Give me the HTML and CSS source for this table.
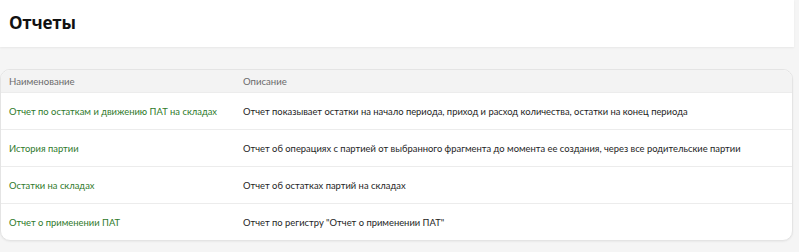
FILE: index.html
```html
<!DOCTYPE html>
<html lang="ru">
<head>
<meta charset="utf-8">
<link rel="stylesheet" href="styles.css">
</head>
<body>
<div class="page">
  <header class="topbar">
    <h1 class="title">Отчеты</h1>
  </header>
  <main class="content">
    <section class="card">
      <div class="row head">
        <div class="cell name">Наименование</div>
        <div class="cell desc">Описание</div>
      </div>
      <div class="row">
        <div class="cell name link">Отчет по остаткам и движению ПАТ на складах</div>
        <div class="cell desc">Отчет показывает остатки на начало периода, приход и расход количества, остатки на конец периода</div>
      </div>
      <div class="row">
        <div class="cell name link">История партии</div>
        <div class="cell desc">Отчет об операциях с партией от выбранного фрагмента до момента ее создания, через все родительские партии</div>
      </div>
      <div class="row">
        <div class="cell name link">Остатки на складах</div>
        <div class="cell desc">Отчет об остатках партий на складах</div>
      </div>
      <div class="row">
        <div class="cell name link">Отчет о применении ПАТ</div>
        <div class="cell desc">Отчет по регистру "Отчет о применении ПАТ"</div>
      </div>
    </section>
  </main>
</div>
</body>
</html>
```
FILE: styles.css
```css
* { box-sizing: border-box; }
html, body { margin: 0; padding: 0; }
body {
  background: #f5f5f5;
  font-family: Lato, Roboto, sans-serif;
  color: #1a1a1a;
  width: 799px;
  height: 252px;
  overflow: hidden;
}
.page { padding-right: 5px; }
.topbar {
  background: #fff;
  height: 47px;
  display: flex;
  align-items: center;
  padding-left: 9px;
  box-shadow: 0 1px 2px rgba(0,0,0,0.06);
}
.title {
  margin: 0;
  font-family: "Open Sans", "Noto Sans", sans-serif;
  font-size: 17px;
  font-weight: 700;
  color: #111;
  letter-spacing: -0.2px;
  padding-bottom: 3px;
}
.content { padding-top: 22px; }
.card {
  background: #fff;
  border: 1px solid #e4e4e4;
  border-radius: 10px;
  overflow: hidden;
  box-shadow: 0 1px 2px rgba(0,0,0,0.05);
  margin-right: 1px;
}
.row {
  display: grid;
  grid-template-columns: 242px 1fr;
  height: 37px;
  align-items: center;
  border-top: 1px solid #ececec;
  font-size: 9.4px;
  white-space: nowrap;
}
.row.head {
  border-top: none;
  height: 22px;
  background: #f3f3f3;
  color: #6b6b6b;
  font-size: 9.6px;
}
.cell.name { padding-left: 8px; }
.link { color: #2f7a2b; }
.desc { color: #1e1e1e; }
.head .desc { color: #6b6b6b; }
```
